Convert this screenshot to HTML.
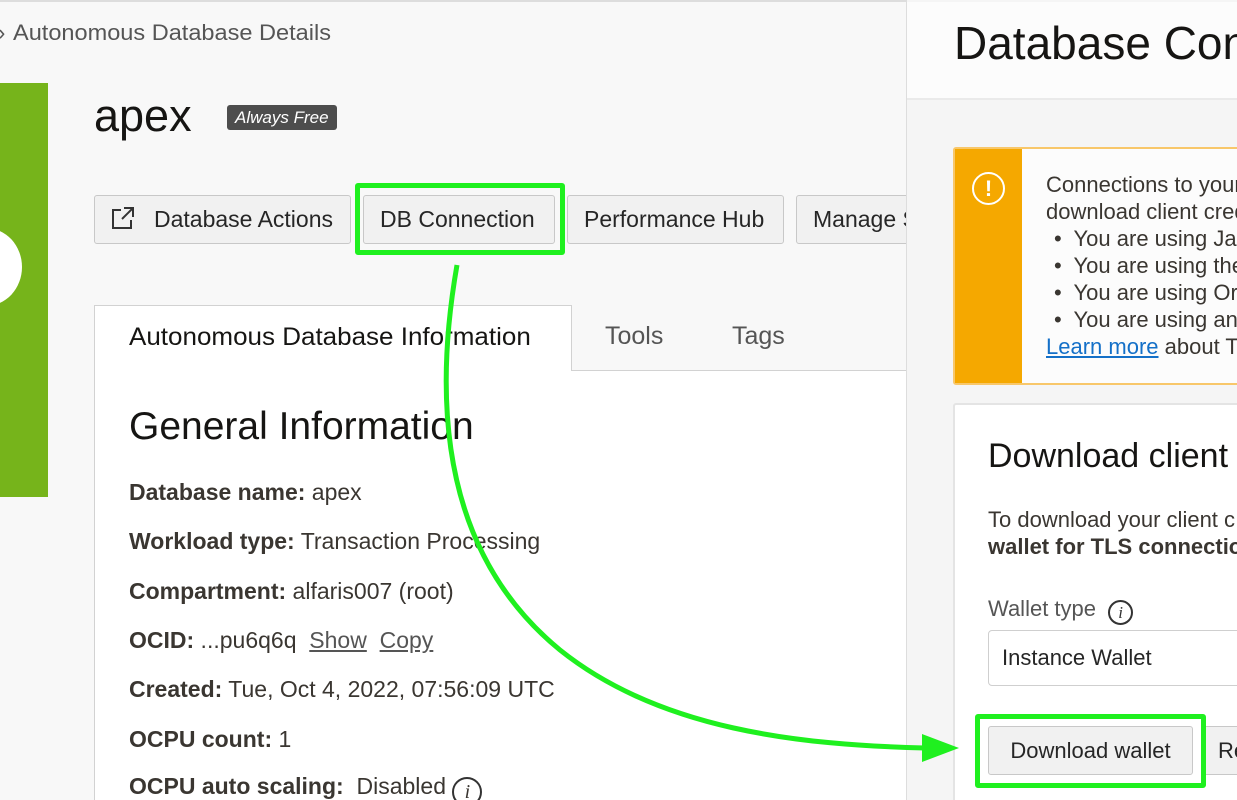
<!DOCTYPE html>
<html><head><meta charset="utf-8"><style>
*{margin:0;padding:0;box-sizing:border-box}
html,body{width:1237px;height:800px;overflow:hidden}
body{background:#f8f8f8;font-family:"Liberation Sans",sans-serif;color:#161513;position:relative}
.a{position:absolute;white-space:nowrap}
.btn{position:absolute;top:195px;height:49px;border:1px solid #c8c8c8;border-radius:3px;background:#f1f1f1;font-size:23px;line-height:47px;color:#262626;padding:0 16px;white-space:nowrap;overflow:hidden}
.row{position:absolute;left:129px;font-size:23px;color:#3a3631;white-space:nowrap}
.row b{color:#3a3631}
.hl{position:absolute;border:5px solid #1ff01f;border-radius:3px}
</style></head><body>
<div class="a" style="left:0;top:0;width:1237px;height:2px;background:#ddd"></div>
<div class="a" style="left:-2px;top:20px;font-size:22px;color:#555">› </div>
<div class="a" style="left:13px;top:20px;font-size:22px;color:#555;transform:scaleX(1.07);transform-origin:left">Autonomous Database Details</div>
<div class="a" style="left:0;top:83px;width:48px;height:414px;background:#76b41b;overflow:hidden"><div style="position:absolute;left:-50px;top:145px;width:72px;height:78px;border-radius:50%;background:#fff"></div></div>
<div class="a" style="left:94px;top:90px;font-size:45px;color:#161513">apex</div>
<div class="a" style="left:227px;top:105px;height:25px;padding:0 8px;background:#4d4d4d;border-radius:3px;color:#fff;font-style:italic;font-size:17px;line-height:25px">Always Free</div>
<div class="btn" style="left:94px;width:257px;padding-left:59px">Database Actions</div>
<svg class="a" style="left:110px;top:205px" width="26" height="26" viewBox="0 0 26 26" fill="none" stroke="#333" stroke-width="2"><path d="M11 5H3v18h18v-8M14 3h9v9M23 3L12 14"/></svg>
<div class="btn" style="left:363px;width:192px">DB Connection</div>
<div class="btn" style="left:567px;width:217px">Performance Hub</div>
<div class="btn" style="left:796px;width:130px">Manage S</div>
<!-- tabs -->
<div class="a" style="left:94px;top:370px;width:812px;height:1px;background:#d2d2d2"></div>
<div class="a" style="left:94px;top:305px;width:478px;height:495px;background:#fff;border:1px solid #d2d2d2;border-bottom:none"></div>
<div class="a" style="left:94px;top:371px;width:812px;height:429px;background:#fff;border-left:1px solid #d2d2d2"></div>
<div class="a" style="left:129px;top:323px;font-size:25px;color:#161513;transform:scaleX(1.04);transform-origin:left">Autonomous Database Information</div>
<div class="a" style="left:605px;top:322px;font-size:25px;color:#555">Tools</div>
<div class="a" style="left:732px;top:322px;font-size:25px;color:#555">Tags</div>
<div class="a" style="left:129px;top:405px;font-size:39px;color:#161513">General Information</div>
<div class="row" style="top:479px"><b>Database name:</b> apex</div>
<div class="row" style="top:528px"><b>Workload type:</b> Transaction Processing</div>
<div class="row" style="top:578px"><b>Compartment:</b> alfaris007 (root)</div>
<div class="row" style="top:627px"><b>OCID:</b> ...pu6q6q &nbsp;<u style="color:#555">Show</u> &nbsp;<u style="color:#555">Copy</u></div>
<div class="row" style="top:676px"><b>Created:</b> Tue, Oct 4, 2022, 07:56:09 UTC</div>
<div class="row" style="top:726px"><b>OCPU count:</b> 1</div>
<div class="row" style="top:773px"><b>OCPU auto scaling:</b>&nbsp; Disabled <span style="display:inline-block;width:30px;height:30px;border:2px solid #333;border-radius:50%;text-align:center;line-height:26px;font-style:italic;font-family:'Liberation Serif',serif;font-size:20px;vertical-align:-4px">i</span></div>
<!-- right panel -->
<div class="a" style="left:906px;top:0;width:331px;height:800px;background:#f5f5f5;border-left:1px solid #ddd"></div>
<div class="a" style="left:907px;top:2px;width:330px;height:98px;background:#fcfcfc;border-bottom:2px solid #eaeaea"></div>
<div class="a" style="left:954px;top:16px;font-size:46px;color:#161513">Database Con</div>
<div class="a" style="left:953px;top:147px;width:290px;height:238px;background:#fcfcfc;border:2px solid #f8c76a;border-radius:3px"></div>
<div class="a" style="left:955px;top:149px;width:67px;height:234px;background:#f5a800"></div>
<div class="a" style="left:972px;top:172px;width:33px;height:33px;border:2px solid #fff;border-radius:50%;color:#fff;text-align:center;font-weight:bold;font-size:22px;line-height:29px">!</div>
<div class="a" style="left:1046px;top:171px;font-size:22px;line-height:27px;color:#3a3631">Connections to your<br>download client cred
<div style="padding-left:8px">•&nbsp; You are using Ja<br>•&nbsp; You are using the<br>•&nbsp; You are using Or<br>•&nbsp; You are using an</div>
<span style="color:#1470c8;text-decoration:underline">Learn more</span> about T</div>
<div class="a" style="left:953px;top:403px;width:290px;height:400px;background:#fff;border:2px solid #e4e4e4;border-radius:3px"></div>
<div class="a" style="left:988px;top:437px;font-size:34px;color:#161513">Download client</div>
<div class="a" style="left:988px;top:506px;font-size:22px;line-height:27px;color:#3a3631">To download your client c<br><b>wallet for TLS connectio</b></div>
<div class="a" style="left:988px;top:596px;font-size:22px;color:#555">Wallet type <span style="display:inline-block;width:25px;height:25px;border:2px solid #333;border-radius:50%;text-align:center;line-height:21px;font-style:italic;font-family:'Liberation Serif',serif;font-size:17px;margin-left:6px;vertical-align:-2px;color:#333">i</span></div>
<div class="a" style="left:988px;top:630px;width:260px;height:56px;border:1px solid #cfcfcf;border-radius:4px;background:#fff;font-size:22px;line-height:54px;padding-left:13px;color:#262626">Instance Wallet</div>
<div class="a" style="left:988px;top:726px;width:205px;height:49px;border:1px solid #c8c8c8;border-radius:3px;background:#f1f1f1;font-size:22px;line-height:47px;text-align:center;color:#262626">Download wallet</div>
<div class="a" style="left:1203px;top:726px;width:50px;height:49px;border:1px solid #c8c8c8;border-radius:3px;background:#f1f1f1;font-size:22px;line-height:47px;padding-left:14px;color:#262626">Re</div>
<div class="hl" style="left:355px;top:183px;width:210px;height:72px"></div>
<div class="hl" style="left:975px;top:714px;width:231px;height:74px"></div>
<!-- arrow -->
<svg class="a" style="left:0;top:0" width="1237" height="800"><path d="M457 265C430 420 450 560 560 650C660 730 800 745 925 748" fill="none" stroke="#1ff01f" stroke-width="5"/><path d="M922 734L959 748L922 762Z" fill="#1ff01f"/></svg>
</body></html>
